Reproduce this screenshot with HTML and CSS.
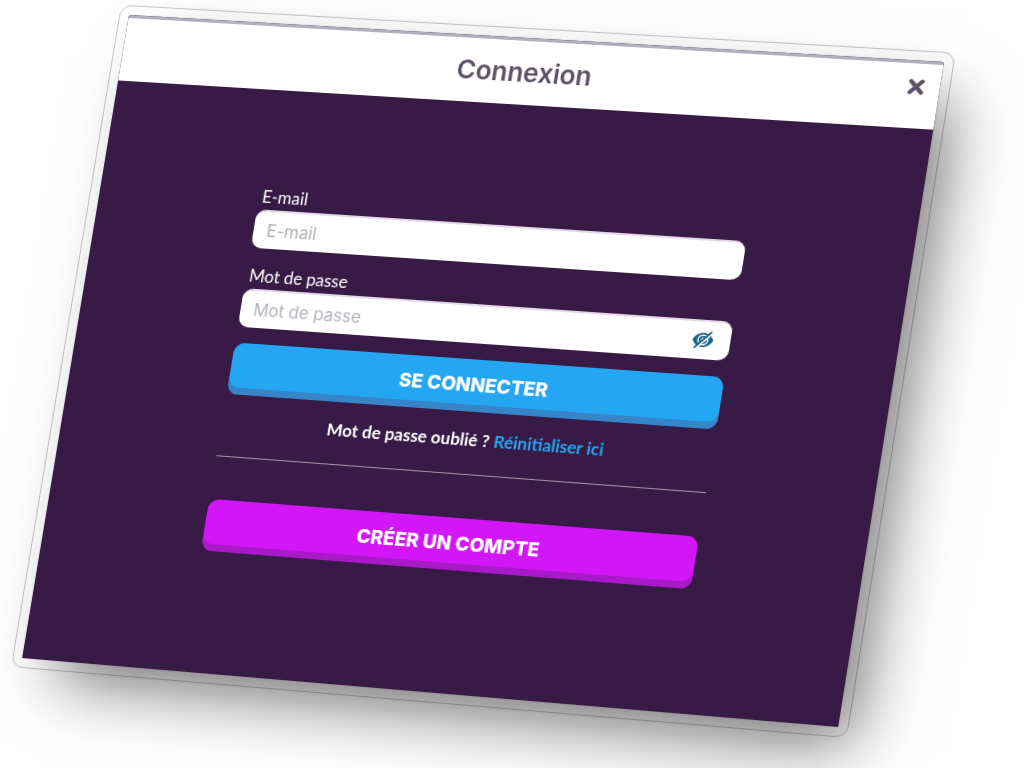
FILE: index.html
```html
<!DOCTYPE html>
<html lang="fr">
<head>
  <meta charset="utf-8">
  <meta name="viewport" content="width=device-width, initial-scale=1">
  <title>Connexion</title>
  <link rel="stylesheet" href="styles.css">
</head>
<body>
  <main class="scene">
    <section class="dialog" aria-labelledby="dialog-title">
      <header class="dialog-header">
        <h1 class="dialog-title" id="dialog-title">Connexion</h1>
        <button class="close" type="button" aria-label="Fermer">
          <svg viewBox="0 0 16 16" width="16" height="16" aria-hidden="true"><path d="M2.500 2.500 13.500 13.500M13.500 2.500 2.500 13.500" fill="none" stroke="currentColor" stroke-width="4" stroke-linecap="round"/></svg>
        </button>
      </header>
      <form class="form">
        <div class="field">
          <label class="label" for="email">E-mail</label>
          <input class="input" id="email" type="email" placeholder="E-mail">
        </div>
        <div class="field">
          <label class="label" for="password">Mot de passe</label>
          <div class="password">
            <input class="input" id="password" type="password" placeholder="Mot de passe">
            <button class="reveal" type="button" aria-label="Afficher le mot de passe">
              <svg viewBox="0 0 22 18" width="22" height="18" aria-hidden="true">
                <path d="M.8 9C3 4.500 6.500 2 11 2S19 4.500 21.200 9C19 13.500 15.500 16 11 16S3 13.500 .8 9Z" fill="currentColor"/>
                <circle cx="11" cy="9" r="4.800" fill="none" stroke="#fff" stroke-width="1.400"/>
                <path d="M11 6.600A2.400 2.400 0 0 1 8.600 9" fill="none" stroke="#fff" stroke-width="1.200"/>
                <path d="M4.800 17.400 19 2" stroke="#fff" stroke-width="2.600"/>
                <path d="M3.600 16.800 18.400 1.200" stroke="currentColor" stroke-width="1.800" stroke-linecap="round"/>
              </svg>
            </button>
          </div>
        </div>
        <button class="button button-login" type="submit">SE CONNECTER</button>
        <p class="reset">Mot de passe oublié ? <a class="reset-link" href="#">Réinitialiser ici</a></p>
        <hr class="divider">
        <button class="button button-create" type="button">CRÉER UN COMPTE</button>
      </form>
    </section>
  </main>
</body>
</html>
```
FILE: styles.css
```css
* {
  box-sizing: border-box;
}

body {
  margin: 0;
  min-height: 100vh;
  overflow: hidden;
  background: #fff;
  font-family: Lato, "Open Sans", sans-serif;
}

.scene {
  padding: 15px 79px 0 129px;
}

/* The whole dialog is tilted in perspective. */
.dialog {
  position: relative;
  background: #371a45;
  border-radius: 3px 3px 0 0;
  transform-origin: 0 0;
  transform: matrix3d(
    0.96635, 0.05573, 0, -0.00003979,
    -0.16223, 0.97636, 0, -0.0000083,
    0, 0, 1, 0,
    0, 0, 0, 1);
  box-shadow:
    0 0 1px rgba(0, 0, 0, 0.5),
    26px 30px 64px -12px rgba(0, 0, 0, 0.54),
    24px 16px 40px rgba(0, 0, 0, 0.03);
}

.dialog::after {
  content: "";
  position: absolute;
  inset: -10px;
  border: 1px solid rgba(0, 0, 0, 0.22);
  border-radius: 12px;
  box-shadow: 0 0 1px rgba(0, 0, 0, 0.15);
  pointer-events: none;
}

.dialog-header {
  position: relative;
  display: flex;
  align-items: center;
  justify-content: center;
  height: 67px;
  border-top: 3px solid #b3b0ba;
  border-radius: 3px 3px 0 0;
  background: #fff;
  color: #5c5165;
}

.dialog-title {
  margin: 0;
  font: 600 26px/32px Inter, sans-serif;
}

.close {
  position: absolute;
  top: 15px;
  right: 15px;
  display: flex;
  padding: 0;
  border: 0;
  background: none;
  color: inherit;
  cursor: pointer;
}

.form {
  display: flex;
  flex-direction: column;
  width: 60%;
  margin: 0 auto;
  padding: 96px 0 122px;
  color: #fff;
}

.field {
  display: flex;
  flex-direction: column;
  gap: 1px;
  margin-bottom: 16px;
}

.label {
  padding-left: 3px;
  font-size: 17px;
  line-height: 24px;
}

.input {
  width: 100%;
  height: 39px;
  padding: 0 13px;
  border: 0;
  border-top: 2px solid #e2d9e6;
  border-radius: 10px;
  background: #fff;
  color: #371a45;
  font: 400 17px/24px Inter, sans-serif;
}

.input::placeholder {
  color: #b4b1b9;
  opacity: 1;
}

.password {
  position: relative;
  display: flex;
}

.reveal {
  position: absolute;
  top: 11px;
  right: 16px;
  display: flex;
  padding: 0;
  border: 0;
  background: none;
  color: #19608c;
  cursor: pointer;
}

.button {
  height: 52px;
  padding: 0 16px;
  border: 0;
  border-radius: 11px;
  color: #fff;
  font: 800 19px/24px Inter, sans-serif;
  cursor: pointer;
}

.button-login {
  background: #24a6f2;
  box-shadow: inset 0 -7px #3585c8;
}

.button-create {
  background: #d216f8;
  box-shadow: inset 0 -7px #a81ac8;
}

.reset {
  margin: 16px 0 22px;
  font-size: 17px;
  font-weight: 700;
  line-height: 24px;
  text-align: center;
}

.reset-link {
  color: #24a6f2;
  text-decoration: none;
}

.divider {
  width: 100%;
  height: 1px;
  margin: 0 0 43px;
  border: 0;
  background: #a292aa;
}
```
